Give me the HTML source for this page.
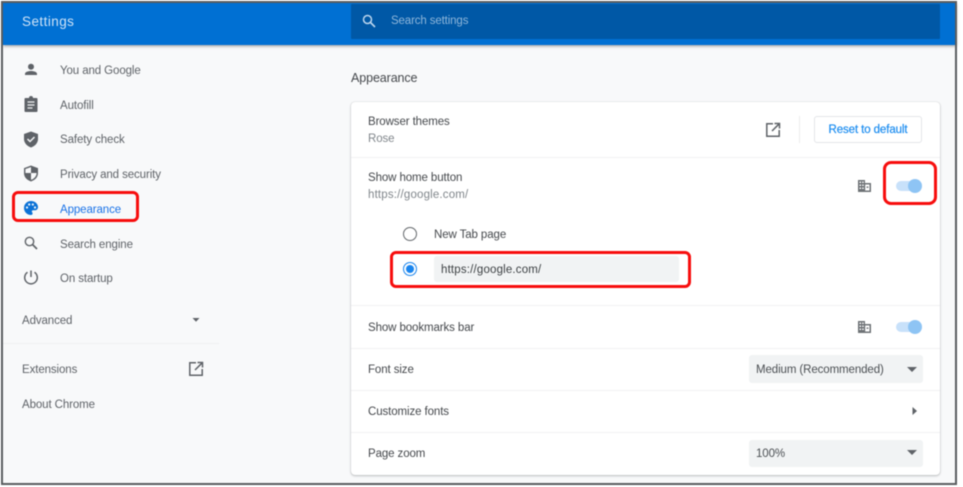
<!DOCTYPE html>
<html><head><meta charset="utf-8">
<style>
html,body{margin:0;padding:0;background:#fff}
#p{position:relative;width:963px;height:487px;overflow:hidden;background:#fff;font-family:"Liberation Sans",sans-serif;font-size:11.5px;color:#5f6368;filter:blur(.45px)}
#p div,#p svg,#p span{position:absolute}
.t{white-space:nowrap;line-height:14px;letter-spacing:-.1px;margin-top:1px}
.u{letter-spacing:.17px}
.d{left:351px;width:589px;height:1px;background:#f1f2f3}
.k{color:#45484c}
.r{border:3px solid #f70d0d;border-radius:7px;box-sizing:border-box}
.g{fill:#5f6368}
</style></head><body>
<div id="p">
<div style="left:3px;top:3px;width:953px;height:480px;background:#f8f9fa"></div>
<div style="left:3px;top:3px;width:953px;height:42px;background:#0070d3;box-shadow:0 1px 3px rgba(60,64,67,.55)"></div>
<div style="left:351px;top:4px;width:589px;height:35px;background:#0058a6;border-radius:1px"></div>
<div class="t" style="left:22px;top:13px;font-size:13.5px;line-height:16px;color:#cfe3f7;letter-spacing:.45px">Settings</div>
<svg style="left:361px;top:13px" width="16" height="16" viewBox="0 0 16 16"><circle cx="6.500" cy="6.500" r="4" fill="none" stroke="#bcd6ee" stroke-width="1.500"/><path d="M9.500 9.500L14 14" stroke="#bcd6ee" stroke-width="1.600"/></svg>
<div class="t" style="left:391px;top:13px;color:#8eb6da;letter-spacing:-.13px">Search settings</div>

<svg style="left:22px;top:61px" width="18" height="18" viewBox="0 0 18 18"><circle class="g" cx="9" cy="5.800" r="3"/><path class="g" d="M3 14v-1.200C3 10.800 6.800 10 9 10s6 .8 6 2.800V14z"/></svg>
<div class="t" style="left:60px;top:63px">You and Google</div>
<svg style="left:22px;top:95px" width="18" height="18" viewBox="0 0 18 18"><path class="g" d="M3.500 3H7a2 2 0 0 1 4 0h3.500a1 1 0 0 1 1 1v12a1 1 0 0 1-1 1h-11a1 1 0 0 1-1-1V4a1 1 0 0 1 1-1z"/><path d="M5.500 7h7M5.500 10h7M5.500 13h5" stroke="#f0f1f2" stroke-width="1.300"/></svg>
<div class="t" style="left:60px;top:98px">Autofill</div>
<svg style="left:22px;top:130px" width="18" height="18" viewBox="0 0 18 18"><path class="g" d="M9 1.500L16 4v5c0 4-3 7-7 8.500C5 16 2 13 2 9V4z"/><path d="M5.500 9l2.500 2.500 4.500-4.500" stroke="#f4f5f6" stroke-width="1.500" fill="none"/></svg>
<div class="t" style="left:60px;top:132px">Safety check</div>
<svg style="left:22px;top:164px" width="18" height="18" viewBox="0 0 18 18"><path d="M9 2.300L15.300 4.600v4.400c0 3.600-2.700 6.300-6.300 7.700C5.400 15.300 2.700 12.600 2.700 9V4.600z" fill="#f8f9fa" stroke="#5f6368" stroke-width="1.400"/><path class="g" d="M9 2.300L15.300 4.600V9H9zM9 9H2.700c0 3.600 2.700 6.300 6.300 7.700z"/></svg>
<div class="t" style="left:60px;top:167px">Privacy and security</div>

<svg style="left:22px;top:199px" width="18" height="18" viewBox="0 0 18 18"><path fill="#0b72d6" d="M9 2a7 7 0 0 0 0 14c1 0 1.600-.7 1.600-1.500 0-1-.8-1.200-.8-2 0-.7.600-1.200 1.300-1.200h1.700c1.800 0 3.200-1.300 3.200-3.200C16 4.800 12.800 2 9 2z"/><g fill="#f3f7fc"><circle cx="5" cy="8.500" r="1.100"/><circle cx="7.200" cy="5.500" r="1.100"/><circle cx="10.800" cy="5.500" r="1.100"/><circle cx="13" cy="8.500" r="1.100"/></g></svg>
<div class="t" style="left:60px;top:202px;color:#1a73e8">Appearance</div>
<div class="r" style="left:12px;top:191px;width:127px;height:31px;border-radius:6px"></div>

<svg style="left:22px;top:234px" width="18" height="18" viewBox="0 0 18 18"><circle cx="7.500" cy="7.500" r="4.200" fill="none" stroke="#5f6368" stroke-width="1.400"/><path d="M10.500 10.500L15 15" stroke="#5f6368" stroke-width="1.700"/></svg>
<div class="t" style="left:60px;top:237px">Search engine</div>
<svg style="left:22px;top:268px" width="18" height="18" viewBox="0 0 18 18"><path d="M9 2.500V9" stroke="#5f6368" stroke-width="1.500"/><path d="M5.500 4.300a6.300 6.300 0 1 0 7 0" fill="none" stroke="#5f6368" stroke-width="1.500"/></svg>
<div class="t" style="left:60px;top:271px">On startup</div>
<div class="t" style="left:22px;top:313px">Advanced</div>
<svg style="left:191px;top:317px" width="10" height="6" viewBox="0 0 10 6"><path class="g" d="M1.500 1h7L5 4.700z"/></svg>
<div style="left:3px;top:343px;width:216px;height:1px;background:#eff0f2"></div>
<div class="t" style="left:22px;top:362px">Extensions</div>
<svg style="left:188px;top:361px" width="16" height="16" viewBox="0 0 16 16"><path d="M8 1.800H1.800v12.400h12.400V8" fill="none" stroke="#5f6368" stroke-width="1.500"/><path d="M9.500 1.500h5V6.500M14.200 1.800L7 9" fill="none" stroke="#5f6368" stroke-width="1.500"/></svg>
<div class="t" style="left:22px;top:397px">About Chrome</div>

<div class="t k" style="left:351px;top:70px;font-size:12.500px;letter-spacing:-.1px">Appearance</div>
<div style="left:351px;top:102px;width:589px;height:373px;background:#fff;border-radius:4px;box-shadow:0 0 1px rgba(60,64,67,.3),0 1px 2px rgba(60,64,67,.3)"></div>
<div class="d" style="top:157px"></div>
<div class="d" style="top:305px"></div>
<div class="d" style="top:348px"></div>
<div class="d" style="top:390px"></div>
<div class="d" style="top:432px"></div>

<div class="t k" style="left:368px;top:114px">Browser themes</div>
<div class="t" style="left:368px;top:131px;color:#80868b">Rose</div>
<svg style="left:765px;top:122px" width="16" height="16" viewBox="0 0 16 16"><path d="M8 1.800H1.800v12.400h12.400V8" fill="none" stroke="#5f6368" stroke-width="1.500"/><path d="M9.500 1.500h5V6.500M14.200 1.800L7 9" fill="none" stroke="#5f6368" stroke-width="1.500"/></svg>
<div style="left:799px;top:116px;width:1px;height:27px;background:#eceded"></div>
<div class="t" style="left:814px;top:115px;width:108px;height:27px;box-sizing:border-box;border:1px solid #e3e5e8;border-radius:3px;text-align:center;line-height:27px;color:#1a8cf0;-webkit-text-stroke:.2px #1a8cf0">Reset to default</div>

<div class="t k" style="left:368px;top:170px">Show home button</div>
<div class="t u" style="left:368px;top:187px;color:#80868b">https://google.com/</div>
<svg style="left:857px;top:179px" width="15" height="14" viewBox="0 0 15 14"><path d="M1 1h7v3h6v9H1z" fill="#6e7276"/><g fill="#fff"><rect x="2.500" y="2.500" width="1.500" height="1.500"/><rect x="5.200" y="2.500" width="1.500" height="1.500"/><rect x="2.500" y="5.500" width="1.500" height="1.500"/><rect x="5.200" y="5.500" width="1.500" height="1.500"/><rect x="2.500" y="8.500" width="1.500" height="1.500"/><rect x="5.200" y="8.500" width="1.500" height="1.500"/><rect x="8.200" y="5.500" width="4.300" height="6"/></g><rect x="9.500" y="7.500" width="2" height="1.300" fill="#6e7276"/></svg>
<div style="left:896px;top:181px;width:24px;height:10px;background:#c8e1fa;border-radius:5px"></div>
<div style="left:908px;top:179px;width:14px;height:14px;background:#8ec4f4;border-radius:50%"></div>
<div class="r" style="left:883px;top:161px;width:54px;height:44px;border-radius:8px"></div>

<div style="left:403px;top:227px;width:14px;height:14px;box-sizing:border-box;border:1.500px solid #63676b;border-radius:50%"></div>
<div class="t k" style="left:434px;top:227px">New Tab page</div>
<div style="left:403px;top:262px;width:14px;height:14px;box-sizing:border-box;border:1.500px solid #1a85ee;border-radius:50%"></div>
<div style="left:406px;top:265px;width:8px;height:8px;background:#1a85ee;border-radius:50%"></div>
<div style="left:434px;top:256px;width:245px;height:26px;background:#f1f3f4;border-radius:3px"></div>
<div class="t u" style="left:441px;top:262px;color:#3c4043">https://google.com/</div>
<div class="r" style="left:390px;top:251px;width:301px;height:37px;border-radius:6px"></div>

<div class="t k" style="left:368px;top:320px">Show bookmarks bar</div>
<svg style="left:857px;top:320px" width="15" height="14" viewBox="0 0 15 14"><path d="M1 1h7v3h6v9H1z" fill="#6e7276"/><g fill="#fff"><rect x="2.500" y="2.500" width="1.500" height="1.500"/><rect x="5.200" y="2.500" width="1.500" height="1.500"/><rect x="2.500" y="5.500" width="1.500" height="1.500"/><rect x="5.200" y="5.500" width="1.500" height="1.500"/><rect x="2.500" y="8.500" width="1.500" height="1.500"/><rect x="5.200" y="8.500" width="1.500" height="1.500"/><rect x="8.200" y="5.500" width="4.300" height="6"/></g><rect x="9.500" y="7.500" width="2" height="1.300" fill="#6e7276"/></svg>
<div style="left:896px;top:322px;width:24px;height:10px;background:#c8e1fa;border-radius:5px"></div>
<div style="left:908px;top:320px;width:14px;height:14px;background:#8ec4f4;border-radius:50%"></div>

<div class="t k" style="left:368px;top:362px">Font size</div>
<div style="left:749px;top:355px;width:174px;height:28px;background:#f1f3f4;border-radius:3px"></div>
<div class="t" style="left:756px;top:362px;color:#4b4f53">Medium (Recommended)</div>
<svg style="left:906px;top:366px" width="12" height="7" viewBox="0 0 12 7"><path class="g" d="M1 1h10L6 6z"/></svg>

<div class="t k" style="left:368px;top:404px">Customize fonts</div>
<svg style="left:911px;top:406px" width="7" height="10" viewBox="0 0 7 10"><path class="g" d="M1.500 1v8L6 5z"/></svg>

<div class="t k" style="left:368px;top:446px">Page zoom</div>
<div style="left:749px;top:440px;width:174px;height:27px;background:#f1f3f4;border-radius:3px"></div>
<div class="t" style="left:756px;top:446px;color:#4b4f53">100%</div>
<svg style="left:906px;top:449px" width="12" height="7" viewBox="0 0 12 7"><path class="g" d="M1 1h10L6 6z"/></svg>

<div style="left:1px;top:1px;width:956px;height:484px;box-sizing:border-box;border:2px solid #5a5d60"></div>
</div>
</body></html>
